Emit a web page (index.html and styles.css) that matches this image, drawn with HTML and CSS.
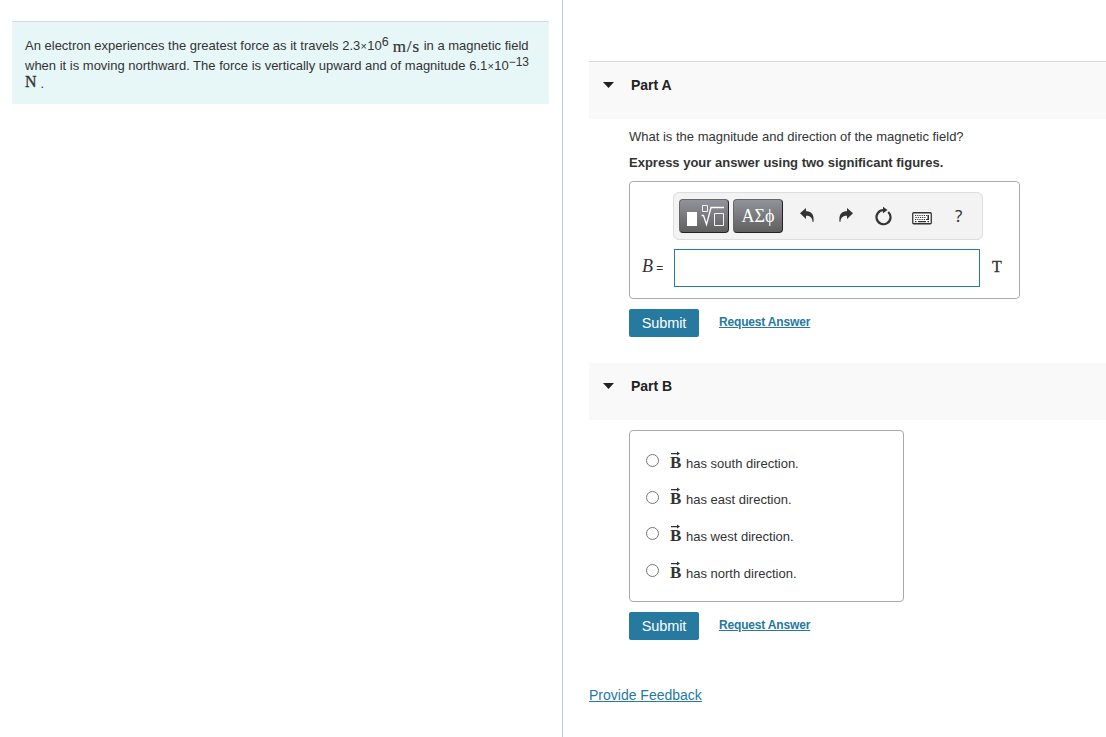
FILE: index.html
```html
<!DOCTYPE html>
<html lang="en">
<head>
<meta charset="utf-8">
<title>Magnetic field problem</title>
<link rel="stylesheet" href="styles.css">
</head>
<body>
<div class="page">
  <aside class="left">
    <div class="problem">
      <div class="line line-1"><span>An electron experiences the greatest force as it travels 2.3</span><span class="times">×</span><span>10</span><span class="sup">6</span><span class="unit">m/s</span><span>in a magnetic field</span></div>
      <div class="line line-2"><span>when it is moving northward. The force is vertically upward and of magnitude 6.1</span><span class="times">×</span><span>10</span><span class="sup">−13</span></div>
      <div class="line line-3"><span class="newton">N</span><span>.</span></div>
    </div>
  </aside>
  <main class="right">
    <header class="part part-a">
      <svg class="caret" viewBox="0 0 11 6"><path d="M0 0h11L5.5 6z"/></svg>
      <h2>Part A</h2>
    </header>
    <section class="body">
      <p class="question">What is the magnitude and direction of the magnetic field?</p>
      <p class="instruction">Express your answer using two significant figures.</p>
      <div class="answer">
        <div class="toolbar">
          <button class="tool" aria-label="Templates">
            <svg width="48" height="32" viewBox="0 0 48 32">
              <path d="M7 12h10v14H7z" fill="#fff"/>
              <path d="M22.5 5.5h5v6h-5zM34.500 13.500h9v12h-9z" fill="none" stroke="#f4f4f4"/>
              <path d="M21.500 15.500h2l3 9 4.500-17h13" fill="none" stroke="#fff" stroke-width="1.300"/>
            </svg>
          </button>
          <button class="tool greek">ΑΣϕ</button>
          <svg class="icon undo" viewBox="0 0 14 16"><path d="M0 6.300 6 1v3.200c5.500 0 8.500 3.500 7.400 10.800h-.8C12.400 10.500 10 8.700 6 8.700V12z"/></svg>
          <svg class="icon redo" viewBox="0 0 14 16"><path d="M14 6.300 8 1v3.200C2.500 4.200-.5 7.700.6 15h.8C1.600 10.500 4 8.700 8 8.700V12z"/></svg>
          <svg class="icon reset" viewBox="0 0 18 20"><path d="M13.200 6A7 7 0 1 1 8.500 4.200" fill="none" stroke="#333" stroke-width="2.200"/><path d="M8 .8 12.500 4 8 7.200z"/></svg>
          <svg class="icon keyboard" viewBox="0 0 20 13"><rect x=".75" y=".75" width="18.500" height="11" rx="1" fill="#fff" stroke="#333" stroke-width="1.300"/><path d="M3 3.500h14M3.500 5.500h11M3 7.500h12" fill="none" stroke="#333" stroke-width="1.100" stroke-dasharray="1.200 1"/><path d="M15.500 3H17v5h-2V6.800h.5zM3 9h1.500v1.200H3zM6 9h8v1.200H6zM15.500 9H17v1.200h-1.500z"/></svg>
          <span class="help">?</span>
        </div>
        <div class="entry">
          <span class="label"><i>B</i> =</span>
          <input class="field" type="text" aria-label="Magnetic field">
          <span class="tesla">T</span>
        </div>
      </div>
      <div class="actions"><button class="submit">Submit</button><a class="request" href="#">Request Answer</a></div>
    </section>
    <header class="part part-b">
      <svg class="caret" viewBox="0 0 11 6"><path d="M0 0h11L5.500 6z"/></svg>
      <h2>Part B</h2>
    </header>
    <section class="body">
      <div class="choices">
        <label class="choice"><input type="radio" name="direction"><span class="vector"><svg viewBox="0 0 9 5"><path d="M0 2h6V.5L9 2.500 6 4.500V3.200H0z"/></svg><b>B</b></span><span>has south direction.</span></label>
        <label class="choice choice-east"><input type="radio" name="direction"><span class="vector"><svg viewBox="0 0 9 5"><path d="M0 2h6V.5L9 2.500 6 4.500V3.200H0z"/></svg><b>B</b></span><span>has east direction.</span></label>
        <label class="choice"><input type="radio" name="direction"><span class="vector"><svg viewBox="0 0 9 5"><path d="M0 2h6V.5L9 2.500 6 4.500V3.200H0z"/></svg><b>B</b></span><span>has west direction.</span></label>
        <label class="choice"><input type="radio" name="direction"><span class="vector"><svg viewBox="0 0 9 5"><path d="M0 2h6V.5L9 2.500 6 4.500V3.200H0z"/></svg><b>B</b></span><span>has north direction.</span></label>
      </div>
      <div class="actions"><button class="submit">Submit</button><a class="request" href="#">Request Answer</a></div>
    </section>
    <a class="feedback" href="#">Provide Feedback</a>
  </main>
</div>
</body>
</html>
```
FILE: styles.css
```css
* { box-sizing: border-box; }
body { margin: 0; background: #fff; color: #333; font: 13px/20px "Liberation Sans", Arial, sans-serif; }
h2, p { margin: 0; }
button { margin: 0; padding: 0; font-family: inherit; }
svg { display: block; flex: none; fill: #333; }
a { color: #26799f; text-decoration: underline; }

.page { display: flex; width: 1106px; height: 737px; overflow: hidden; }
.left { width: 563px; flex: none; padding: 21px 0 0 12px; border-right: 1px solid #b9c5db; }
.right { flex: 1; min-width: 0; padding: 61px 0 0 26px; }

.problem { width: 537px; height: 83px; padding: 14px 0 0 13px; background: #e7f7f8; border-top: 1px solid #d5dddd; }
.line { display: flex; height: 20px; white-space: nowrap; }
.line-3 { height: 16px; line-height: 16px; }
.times { font-size: 11px; width: 7px; text-align: center; }
.sup { font-size: 12px; line-height: 12px; }
.line-1 .sup { font-size: 12.5px; line-height: 13px; }
.unit { width: 28px; margin: 0 3px 0 4px; font: 17px/22px "Liberation Serif", serif; letter-spacing: .9px; -webkit-text-stroke: .2px #333; }
.newton { margin-right: 4px; font: 16px/12px "Liberation Serif", serif; -webkit-text-stroke: .3px #333; }

.part { display: flex; height: 58px; padding: 14px 0 0 14px; background: #f9f9f9; }
.part-a { border-top: 1px solid #dcdcdc; }
.part-b { height: 57px; margin-top: 26px; }
.caret { width: 11px; height: 6px; margin: 6px 17px 0 0; fill: #222; }
.part h2 { color: #222; font-size: 14px; line-height: 18px; }
.body { padding-left: 40px; }
.question { padding-top: 8px; height: 34px; }
.instruction { font-weight: bold; height: 28px; }

.answer { width: 391px; height: 118px; padding: 10px 0 0 12px; border: 1px solid #aaa; border-radius: 4px; }
.toolbar { display: flex; align-items: flex-start; width: 310px; height: 48px; margin-left: 31px; padding: 6px 5px; background: #f3f3f3; border: 1px solid #ddd; border-radius: 6px; }
.tool { width: 50px; height: 34px; margin-right: 4px; color: #fff; background: linear-gradient(#92929b, #606060); border: 1px solid #666; border-right-color: #222; border-bottom-color: #222; border-radius: 4px; }
.tool svg { width: 48px; height: 32px; }
.greek { font: 18px/30px "Liberation Serif", serif; }
.undo { width: 14px; height: 16px; margin: 8px 24px 0 13px; }
.redo { width: 14px; height: 16px; margin: 8px 22px 0 1px; }
.reset { width: 18px; height: 20px; margin: 7px 19px 0 0; }
.keyboard { width: 20px; height: 13px; margin: 13px 23px 0 0; }
.help { font: 17px/34px "Noto Sans", sans-serif; color: #333; }
.entry { display: flex; align-items: center; height: 38px; margin-top: 9px; }
.label { width: 32px; margin-top: -2px; font-size: 12px; white-space: nowrap; }
.label i { font: italic 18px "Liberation Serif", serif; }
.field { width: 306px; height: 38px; padding: 0 6px; background: #fff; border: 1px solid #26799f; }
.tesla { margin: -2px 0 0 12px; font: 16px "Liberation Serif", serif; -webkit-text-stroke: .3px #333; }

.actions { display: flex; height: 28px; margin-top: 10px; }
.submit { width: 70px; height: 28px; padding-bottom: 1px; color: #fff; font-size: 14.5px; letter-spacing: -.1px; background: #26799f; border: 0; border-radius: 2px; }
.request { margin: 3px 0 0 20px; font-size: 12px; line-height: 20px; font-weight: bold; letter-spacing: -.17px; }

.choices { width: 275px; height: 172px; margin-top: 10px; padding: 13px 0 0 16px; border: 1px solid #aaa; border-radius: 4px; }
.choice { display: flex; height: 36.67px; white-space: nowrap; line-height: 40px; }
.choice-east { line-height: 38px; }
.choice input { width: 13px; height: 13px; margin: 10px 11px 0 0; }
.vector { width: 16px; padding-top: 7px; }
.vector svg { width: 9px; height: 5px; margin-left: 1px; }
.vector b { display: block; font: bold 17px/13px "Liberation Serif", serif; }
.choice-east .vector { padding-top: 6px; }

.feedback { display: inline-block; margin-top: 45px; font-size: 14px; line-height: 20px; }
```
